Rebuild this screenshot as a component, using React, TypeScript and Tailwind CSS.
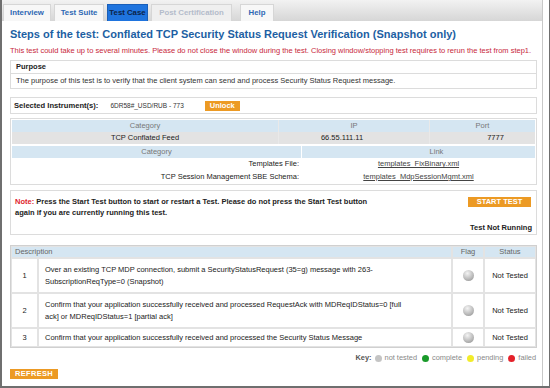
import React from 'react';

const font = { fontFamily: '"Liberation Sans", Arial, sans-serif' };

const tabs = [
    { label: 'Interview', w: 'w-[48px]' },
    { label: 'Test Suite', w: 'w-[50px]' },
    { label: 'Test Case', w: 'w-[41px]', active: true },
    { label: 'Post Certification', w: 'w-[81px]', disabled: true },
    { label: 'Help', w: 'w-[34px]' },
];

const steps = [
    {
        n: 1,
        text: 'Over an existing TCP MDP connection, submit a SecurityStatusRequest (35=g) message with 263-SubscriptionReqType=0 (Snapshot)',
        h: 'h-[33px]',
    },
    {
        n: 2,
        text: 'Confirm that your application successfully received and processed RequestAck with MDReqIDStatus=0 [full ack] or MDReqIDStatus=1 [partial ack]',
        h: 'h-[33px]',
    },
    {
        n: 3,
        text: 'Confirm that your application successfully received and processed the Security Status Message',
        h: 'h-[17px]',
    },
];

const Flag = () => (
    <div className="w-[11px] h-[11px] rounded-full bg-[radial-gradient(circle_at_40%_30%,#f4f4f4_0%,#bdbdbd_55%,#8a8a8a_100%)]" />
);

export default function App() {
    return (
        <div style={font} className="w-[550px] h-[388px] bg-white border-l-2 border-r border-b-2 border-[#6f6f6f] overflow-hidden">
            <div className="w-[541px] h-full border-r border-[#c8c8c8] flex flex-col">
                {/* tab bar */}
                <div className="h-[21px] bg-gradient-to-b from-[#f2f2f2] to-[#d6d6d6] flex items-end gap-[3px] pl-[1px]">
                    {tabs.map(t => (
                        <div
                            key={t.label}
                            className={`${t.w} h-[17px] flex items-center justify-center text-[7.8px] font-bold border border-b-0 ${
                                t.active
                                    ? 'bg-[#1f74de] text-[#0c2348] border-[#1a5fb8]'
                                    : t.disabled
                                    ? 'bg-[#efefef] text-[#b4bccb] border-[#d6d6d6]'
                                    : 'bg-[#f7f7f7] text-[#2e68b4] border-[#d6d6d6]'
                            } ${t.label === 'Help' ? 'ml-[5px]' : ''}`}
                        >
                            {t.label}
                        </div>
                    ))}
                </div>

                <div className="px-[8px] flex flex-col">
                    <h1 className="mt-[7px] text-[11px] leading-[13px] font-bold text-[#1d5fa3]">
                        Steps of the test: Conflated TCP Security Status Request Verification (Snapshot only)
                    </h1>
                    <p className="mt-[5px] text-[7.5px] leading-[10px] text-[#c8283c] whitespace-nowrap">
                        This test could take up to several minutes. Please do not close the window during the test. Closing window/stopping test requires to rerun the test from step1.
                    </p>

                    {/* purpose */}
                    <div className="mt-[4px] w-[527px] h-[29px] border border-[#dcdcdc] text-[7.5px]">
                        <div className="h-[13px] px-[5px] flex items-center font-bold text-[#222] border-b border-[#dcdcdc]">Purpose</div>
                        <div className="h-[14px] px-[5px] flex items-center text-[#333]">
                            The purpose of this test is to verify that the client system can send and process Security Status Request message.
                        </div>
                    </div>

                    {/* instrument */}
                    <div className="mt-[8px] w-[527px] h-[17px] border border-[#dcdcdc] flex items-center px-[3px]">
                        <span className="font-bold text-[#222] text-[7.6px]">Selected Instrument(s):</span>
                        <span className="ml-[12px] text-[#333] text-[6.5px]">6DR58#_USD/RUB - 773</span>
                        <span className="ml-[21px] h-[10px] px-[5px] bg-[#ec9a24] text-white font-bold flex items-center text-[7.5px]">Unlock</span>
                    </div>

                    {/* feed tables */}
                    <div className="mt-[4px] w-[527px] border border-[#dcdcdc] p-[1px] text-[7.5px] text-[#222]">
                        <div className="flex gap-[1px] bg-[#e9e9e9]">
                            <div className="flex-1 flex flex-col">
                                <div className="h-[12px] bg-[#d5e6f2] text-[#777] flex items-center justify-center">Category</div>
                                <div className="h-[12px] bg-[#e3e3e3] flex items-center justify-center">TCP Conflated Feed</div>
                            </div>
                            <div className="w-[150px] flex flex-col">
                                <div className="h-[12px] bg-[#d5e6f2] text-[#777] flex items-center justify-center">IP</div>
                                <div className="h-[12px] bg-[#e3e3e3] flex items-center justify-center pr-[24px]">66.55.111.11</div>
                            </div>
                            <div className="w-[105px] flex flex-col">
                                <div className="h-[12px] bg-[#d5e6f2] text-[#777] flex items-center justify-center">Port</div>
                                <div className="h-[12px] bg-[#e3e3e3] flex items-center justify-center pl-[26px]">7777</div>
                            </div>
                        </div>
                        <div className="mt-[2px] flex gap-[1px]">
                            <div className="w-[289px] flex flex-col">
                                <div className="h-[12px] bg-[#d5e6f2] text-[#777] flex items-center justify-center">Category</div>
                                <div className="h-[12px] flex items-center justify-end pr-[2px]">Templates File:</div>
                                <div className="h-[13px] flex items-center justify-end pr-[2px]">TCP Session Management SBE Schema:</div>
                            </div>
                            <div className="flex-1 flex flex-col">
                                <div className="h-[12px] bg-[#d5e6f2] text-[#777] flex items-center justify-center pl-[36px]">Link</div>
                                <div className="h-[12px] flex items-center justify-center underline text-[#444]">templates_FixBinary.xml</div>
                                <div className="h-[13px] flex items-center justify-center underline text-[#444]">templates_MdpSessionMgmt.xml</div>
                            </div>
                        </div>
                    </div>

                    {/* note */}
                    <div className="mt-[5px] w-[527px] h-[45px] border border-[#dcdcdc] flex px-[4px] pt-[5px] text-[7.5px]">
                        <div className="flex-1 font-bold text-[#222] leading-[11px]">
                            <span className="text-[#e0242c]">Note:</span> Press the Start Test button to start or restart a Test. Please do not press the Start Test button
                            <br />
                            again if you are currently running this test.
                        </div>
                        <div className="w-[80px] flex flex-col items-end">
                            <div className="mt-[1px] mr-[1px] w-[63px] h-[10px] bg-[#ec9a24] text-white font-bold flex items-center justify-center text-[7.5px]">START TEST</div>
                            <div className="mt-[15px] font-bold text-[#222] text-[7.5px]">Test Not Running</div>
                        </div>
                    </div>

                    {/* steps */}
                    <div className="mt-[10px] w-[527px] border border-[#d0d0d0] bg-[#e3e3e3] p-[1px] flex flex-col gap-[2px] text-[7.5px] text-[#222]">
                        <div className="flex gap-[2px] h-[10px]">
                            <div className="flex-1 bg-[#d5e6f2] text-[#666] flex items-center pl-[3px]">Description</div>
                            <div className="w-[30px] bg-[#d5e6f2] text-[#666] flex items-center justify-center">Flag</div>
                            <div className="w-[50px] bg-[#d5e6f2] text-[#666] flex items-center justify-center">Status</div>
                        </div>
                        {steps.map(s => (
                            <div key={s.n} className={`flex gap-[2px] ${s.h}`}>
                                <div className="w-[25px] bg-white flex items-center justify-center">{s.n}</div>
                                <div className="flex-1 bg-white flex items-center pl-[6px] pr-[40px] leading-[12px]">{s.text}</div>
                                <div className="w-[30px] bg-white flex items-center justify-center"><Flag /></div>
                                <div className="w-[50px] bg-white flex items-center justify-center">Not Tested</div>
                            </div>
                        ))}
                    </div>

                    {/* key */}
                    <div className="mt-[6px] w-[527px] h-[8px] flex justify-end items-center gap-[3px] text-[7.4px] text-[#888] pr-[1px]">
                        <span className="font-bold text-[#555]">Key:</span>
                        <span className="w-[7px] h-[7px] rounded-full bg-[#c4c4c4]" />
                        <span>not tested</span>
                        <span className="ml-[2px] w-[7px] h-[7px] rounded-full bg-[#1a9a2a]" />
                        <span>complete</span>
                        <span className="ml-[2px] w-[7px] h-[7px] rounded-full bg-[#f2ec2a]" />
                        <span>pending</span>
                        <span className="ml-[2px] w-[7px] h-[7px] rounded-full bg-[#e4212a]" />
                        <span>failed</span>
                    </div>

                    <div className="mt-[7px] w-[48px] h-[10px] bg-[#ec9a24] text-white font-bold text-[7.5px] flex items-center justify-center tracking-[0.3px]">REFRESH</div>
                </div>
            </div>
        </div>
    );
}
